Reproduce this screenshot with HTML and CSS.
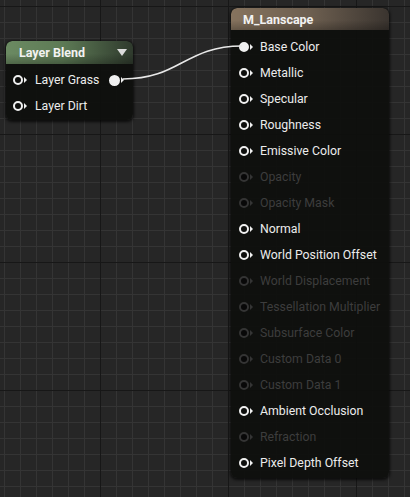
FILE: index.html
```html
<!DOCTYPE html>
<html>
<head>
<meta charset="utf-8">
<link rel="stylesheet" href="styles.css">
</head>
<body>
<div class="canvas">
  <svg class="wire" width="410" height="497" viewBox="0 0 410 497">
    <path d="M123 79 C 180 79, 185 46, 242 46" fill="none" stroke="#e8e8e8" stroke-width="1.6"/>
  </svg>

  <div class="node blend">
    <div class="header green">
      <span class="title">Layer Blend</span>
      <span class="caret"></span>
    </div>
    <div class="body">
      <div class="row">
        <span class="pin"><span class="ring"></span><span class="tri"></span></span>
        <span class="label">Layer Grass</span>
        <span class="pin out"><span class="ring filled"></span><span class="tri"></span></span>
      </div>
      <div class="row">
        <span class="pin"><span class="ring"></span><span class="tri"></span></span>
        <span class="label">Layer Dirt</span>
      </div>
    </div>
  </div>

  <div class="node material">
    <div class="header brown">
      <span class="title">M_Lanscape</span>
    </div>
    <div class="body">
      <div class="row"><span class="pin"><span class="ring filled"></span><span class="tri"></span></span><span class="label">Base Color</span></div>
      <div class="row"><span class="pin"><span class="ring"></span><span class="tri"></span></span><span class="label">Metallic</span></div>
      <div class="row"><span class="pin"><span class="ring"></span><span class="tri"></span></span><span class="label">Specular</span></div>
      <div class="row"><span class="pin"><span class="ring"></span><span class="tri"></span></span><span class="label">Roughness</span></div>
      <div class="row"><span class="pin"><span class="ring"></span><span class="tri"></span></span><span class="label">Emissive Color</span></div>
      <div class="row off"><span class="pin"><span class="ring"></span><span class="tri"></span></span><span class="label">Opacity</span></div>
      <div class="row off"><span class="pin"><span class="ring"></span><span class="tri"></span></span><span class="label">Opacity Mask</span></div>
      <div class="row"><span class="pin"><span class="ring"></span><span class="tri"></span></span><span class="label">Normal</span></div>
      <div class="row"><span class="pin"><span class="ring"></span><span class="tri"></span></span><span class="label">World Position Offset</span></div>
      <div class="row off"><span class="pin"><span class="ring"></span><span class="tri"></span></span><span class="label">World Displacement</span></div>
      <div class="row off"><span class="pin"><span class="ring"></span><span class="tri"></span></span><span class="label">Tessellation Multiplier</span></div>
      <div class="row off"><span class="pin"><span class="ring"></span><span class="tri"></span></span><span class="label">Subsurface Color</span></div>
      <div class="row off"><span class="pin"><span class="ring"></span><span class="tri"></span></span><span class="label">Custom Data 0</span></div>
      <div class="row off"><span class="pin"><span class="ring"></span><span class="tri"></span></span><span class="label">Custom Data 1</span></div>
      <div class="row"><span class="pin"><span class="ring"></span><span class="tri"></span></span><span class="label">Ambient Occlusion</span></div>
      <div class="row off"><span class="pin"><span class="ring"></span><span class="tri"></span></span><span class="label">Refraction</span></div>
      <div class="row"><span class="pin"><span class="ring"></span><span class="tri"></span></span><span class="label">Pixel Depth Offset</span></div>
    </div>
  </div>
</div>
</body>
</html>
```

FILE: styles.css
```css
html, body {
  margin: 0;
  padding: 0;
}
body {
  width: 410px;
  height: 497px;
  overflow: hidden;
  font-family: Roboto, "Liberation Sans", sans-serif;
  font-size: 12px;
  color: #ececec;
}
.canvas {
  position: relative;
  width: 410px;
  height: 497px;
  background-color: #262626;
  background-image:
    linear-gradient(to right, #171717 1px, transparent 1px),
    linear-gradient(to bottom, #171717 1px, transparent 1px),
    linear-gradient(to right, #343434 1px, transparent 1px),
    linear-gradient(to bottom, #343434 1px, transparent 1px);
  background-size: 128px 128px, 128px 128px, 16px 16px, 16px 16px;
  background-position: 100px 0, 0 6px, 4px 0, 0 6px;
}
.wire {
  position: absolute;
  left: 0;
  top: 0;
  z-index: 2;
  pointer-events: none;
}
.node {
  position: absolute;
  background: rgba(14, 15, 13, 0.93);
  border-radius: 6px;
  box-shadow: 0 1px 3px 1px rgba(0, 0, 0, 0.7);
  display: flex;
  flex-direction: column;
  overflow: hidden;
}
.blend {
  left: 6px;
  top: 41px;
  width: 127px;
  height: 79px;
}
.material {
  left: 231px;
  top: 8px;
  width: 158px;
  height: 470px;
}
.header {
  display: flex;
  align-items: center;
  justify-content: space-between;
  font-weight: bold;
  font-size: 12.5px;
  color: #f2f2f2;
  border-radius: 6px 6px 0 0;
}
.green {
  height: 23px;
  padding: 0 6px 0 13px;
  background: linear-gradient(to bottom, rgba(0,0,0,0) 0%, rgba(0,0,0,0) 55%, rgba(0,0,0,0.25) 100%),
              linear-gradient(to right, #6b8a62 0%, #5d7a55 45%, #2f3a2d 100%);
}
.brown {
  height: 22px;
  padding: 0 12px;
  background: linear-gradient(to bottom, rgba(0,0,0,0) 0%, rgba(0,0,0,0) 55%, rgba(0,0,0,0.25) 100%),
              linear-gradient(to right, #86735e 0%, #6d5f50 50%, #3a342f 100%);
}
.caret {
  width: 0;
  height: 0;
  border-left: 5.5px solid transparent;
  border-right: 5.5px solid transparent;
  border-top: 7px solid #dcdcdc;
}
.body {
  display: flex;
  flex-direction: column;
  padding: 4px 0 2px;
}
.blend .body {
  padding: 3px 0 1px;
}
.row {
  display: flex;
  align-items: center;
  height: 26px;
  padding-left: 8px;
  gap: 7px;
  font-size: 12.3px;
}
.blend .row {
  padding-left: 7px;
  gap: 8px;
}
.pin {
  display: flex;
  align-items: center;
  gap: 1px;
}
.ring {
  width: 6px;
  height: 6px;
  border: 2px solid #f0f0f0;
  border-radius: 50%;
  background: #0e0f0d;
}
.ring.filled {
  background: #f0f0f0;
}
.tri {
  width: 0;
  height: 0;
  border-top: 3px solid transparent;
  border-bottom: 3px solid transparent;
  border-left: 3px solid #f0f0f0;
}
.pin.out {
  margin-left: auto;
  margin-right: 9px;
}
.pin.out .ring {
  width: 7px;
  height: 7px;
}
.label {
  white-space: nowrap;
}
.off .label {
  color: #3d3d3d;
}
.off .ring {
  border-color: #343434;
  background: #080808;
}
.off .tri {
  border-left-color: #343434;
}
```
